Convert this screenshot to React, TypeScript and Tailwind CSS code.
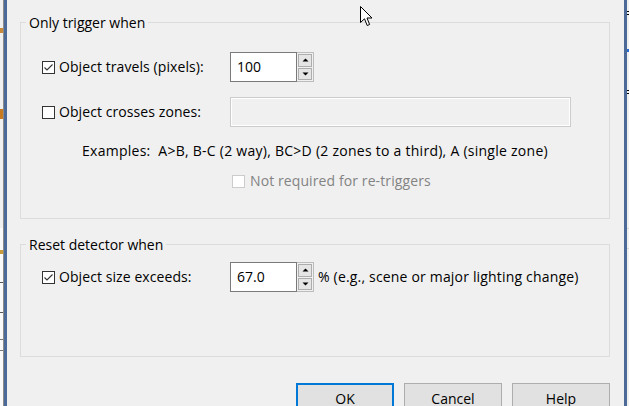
import React from "react";

const font = { fontFamily: '"Open Sans", "Noto Sans", sans-serif' };

function Check({ checked, disabled }: { checked?: boolean; disabled?: boolean }) {
  return (
    <div
      className={
        "w-[13px] h-[13px] shrink-0 border bg-white flex items-center justify-center " +
        (disabled ? "border-[#cccccc]" : "border-[#333333]")
      }
    >
      {checked && (
        <svg width="11" height="11" viewBox="0 0 11 11">
          <path d="M1.5 5.5 L4 8 L9.5 2.5" fill="none" stroke="#333333" strokeWidth="1.1" />
        </svg>
      )}
    </div>
  );
}

function Spin({ value }: { value: string }) {
  return (
    <div className="flex h-[30px] w-[84px] shrink-0">
      <div className="w-[67px] h-full border border-[#7a7a7a] bg-white pl-[6px] flex items-center text-[14px] text-black leading-[16px]">
        {value}
      </div>
      <div className="w-[17px] h-full border border-[#bcbcbc] border-l-0 flex flex-col p-[1px] gap-[1px] bg-[#f0f0f0]">
        <div className="flex-1 border border-[#adadad] bg-[#e5e5e5] flex items-center justify-center">
          <svg width="7" height="4" viewBox="0 0 7 4">
            <path d="M0.5 3.5 L3.5 0.5 L6.5 3.5 Z" fill="#000" />
          </svg>
        </div>
        <div className="flex-1 border border-[#adadad] bg-[#e5e5e5] flex items-center justify-center">
          <svg width="7" height="4" viewBox="0 0 7 4">
            <path d="M0.5 0.5 L3.5 3.5 L6.5 0.5 Z" fill="#000" />
          </svg>
        </div>
      </div>
    </div>
  );
}

export default function App() {
  return (
    <div className="w-[629px] h-[406px] overflow-hidden flex bg-[#f0f0f0] text-[14px] text-black" style={font}>
      {/* left edge of underlying window */}
      <div className="w-[3px] h-full flex flex-col shrink-0">
        <div className="h-[228px] bg-[#f0f0f0] flex flex-col">
          <div className="mt-[28px] h-[5px] bg-[#c88a3a]" />
          <div className="mt-[76px] h-[10px] bg-[#c87a20]" />
        </div>
        <div className="flex-1 bg-[#fafafa] flex flex-col">
          <div className="mt-[22px] h-[4px] bg-[#c89a3a]" />
          <div className="mt-[28px] h-[1px] bg-[#555]" />
          <div className="mt-[29px] h-[1px] bg-[#555]" />
          <div className="mt-[26px] h-[1px] bg-[#777]" />
          <div className="mt-[10px] h-[1px] bg-[#777]" />
        </div>
      </div>
      <div className="w-[1px] h-full bg-[#8c8c8c] shrink-0" />
      <div className="w-[3px] h-full bg-[#4b6a98] shrink-0" />

      {/* dialog */}
      <div className="relative w-[617px] h-full shrink-0 bg-[#f0f0f0]">
        <div className="flex flex-col">
          <fieldset className="ml-[13px] mt-[15px] w-[590px] h-[204px] border border-[#dcdcdc]">
            <legend className="ml-[5px] px-[3px] leading-[15px]">Only trigger when</legend>
            <div className="flex flex-col pt-[22px]">
              <div className="flex h-[30px] items-center pl-[21px]">
                <div className="flex items-center w-[188px] gap-[4px]">
                  <Check checked />
                  <span className="leading-[16px] tracking-[0.08px]">Object travels (pixels):</span>
                </div>
                <Spin value="100" />
              </div>
              <div className="flex h-[30px] items-center pl-[21px] mt-[15px]">
                <div className="flex items-center w-[188px] gap-[4px]">
                  <Check />
                  <span className="leading-[16px] tracking-[0.08px]">Object crosses zones:</span>
                </div>
                <div className="w-[341px] h-[30px] border border-[#cccccc] shadow-[inset_0_0_0_1px_#ffffff] bg-[#f0f0f0]" />
              </div>
              <div className="mt-[16px] pl-[61px] leading-[16px] whitespace-pre tracking-[0.26px]">
                {"Examples:  A>B, B-C (2 way), BC>D (2 zones to a third), A (single zone)"}
              </div>
              <div className="mt-[14px] pl-[211px] flex items-center gap-[5px] h-[16px]">
                <Check disabled />
                <span className="leading-[16px] text-[#838383] tracking-[0.1px]">Not required for re-triggers</span>
              </div>
            </div>
          </fieldset>

          <fieldset className="ml-[13px] mt-[18px] w-[590px] h-[120px] border border-[#dcdcdc]">
            <legend className="ml-[5px] px-[3px] leading-[15px]">Reset detector when</legend>
            <div className="flex flex-col pt-[10px]">
              <div className="flex h-[30px] items-center pl-[21px]">
                <div className="flex items-center w-[188px] gap-[4px]">
                  <Check checked />
                  <span className="leading-[16px] tracking-[0.08px]">Object size exceeds:</span>
                </div>
                <Spin value="67.0" />
                <span className="ml-[4px] leading-[16px] tracking-[0.18px]">% (e.g., scene or major lighting change)</span>
              </div>
            </div>
          </fieldset>

          <div className="mt-[26px] ml-[13px] w-[590px] flex justify-end gap-[10px]">
            <div className="w-[98px] h-[31px] border-2 border-[#0078d7] bg-[#e1e1e1] flex items-center justify-center leading-[16px]">
              OK
            </div>
            <div className="w-[98px] h-[31px] border border-[#adadad] bg-[#e1e1e1] flex items-center justify-center leading-[16px]">
              Cancel
            </div>
            <div className="w-[98px] h-[31px] border border-[#adadad] bg-[#e1e1e1] flex items-center justify-center leading-[16px]">
              Help
            </div>
          </div>
        </div>

        {/* mouse cursor */}
        <svg className="absolute left-[353px] top-[6px]" width="13" height="21" viewBox="0 0 13 21">
          <path
            d="M0.5 0.5 L0.5 16.5 L4.5 12.8 L7.2 19.5 L9.6 18.5 L7 12 L12 12 Z"
            fill="#ffffff"
            stroke="#000000"
            strokeWidth="1"
            strokeLinejoin="miter"
          />
        </svg>
      </div>

      {/* right edge */}
      <div className="w-[3px] h-full bg-[#4b6a98] shrink-0" />
      <div className="w-[2px] h-full bg-[#f0f0f0] shrink-0 flex flex-col">
        <div className="mt-[11px] h-[1px] bg-black" />
        <div className="mt-[2px] h-[1px] bg-black" />
        <div className="mt-[34px] h-[3px] bg-[#2a6ad0]" />
        <div className="mt-[38px] h-[1px] bg-black" />
        <div className="mt-[2px] h-[1px] bg-black" />
        <div className="mt-[134px] h-[1px] bg-[#d8d8d8]" />
        <div className="mt-[19px] h-[1px] bg-[#d8d8d8]" />
      </div>
    </div>
  );
}
